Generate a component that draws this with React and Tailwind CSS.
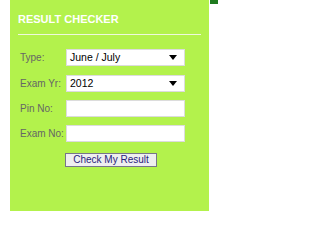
const FieldBox = ({ value, arrow }) => (
  <div className="w-[119px] h-[17px] bg-white border border-[#dcdcdc] flex items-center pl-[3px] pr-[7px] text-[10.5px] text-black">
    <span className="flex-1 leading-none">{value}</span>
    {arrow && (
      <svg width="8" height="5" viewBox="0 0 8 5">
        <path d="M0 0 L8 0 L4 5 Z" fill="#000" />
      </svg>
    )}
  </div>
);

const Row = ({ label, value, arrow, className }) => (
  <div className={"flex items-center pl-[10px] " + (className || "")}>
    <span className="w-[46px] shrink-0 whitespace-nowrap text-[10px] text-[#666] leading-none">{label}</span>
    <FieldBox value={value} arrow={arrow} />
  </div>
);

export default function App() {
  return (
    <div className="w-[218px] h-[211px] bg-white flex items-start font-['Liberation_Sans',Arial,sans-serif]">
      <div className="ml-[10px] w-[199px] h-[211px] shrink-0 bg-[#b3f24c] pt-[13px]">
        <div className="ml-[8px] text-[11px] font-bold text-white leading-[13px]">RESULT CHECKER</div>
        <div className="ml-[8px] mt-[8px] w-[183px] h-px bg-[#eef9dc]" />
        <Row label="Type:" value="June / July" arrow className="mt-[14px]" />
        <Row label="Exam Yr:" value="2012" arrow className="mt-[9px]" />
        <Row label="Pin No:" value="" className="mt-[8px]" />
        <Row label="Exam No:" value="" className="mt-[8px]" />
        <button className="ml-[55px] mt-[11px] w-[92px] h-[14px] bg-[#efefef] border border-[#77758a] text-[10px] leading-none text-[#27237a] flex items-center justify-center">
          Check My Result
        </button>
      </div>
      <div className="ml-[1px] w-[8px] h-[4px] shrink-0 bg-[#1f7a1f]" />
    </div>
  );
}
